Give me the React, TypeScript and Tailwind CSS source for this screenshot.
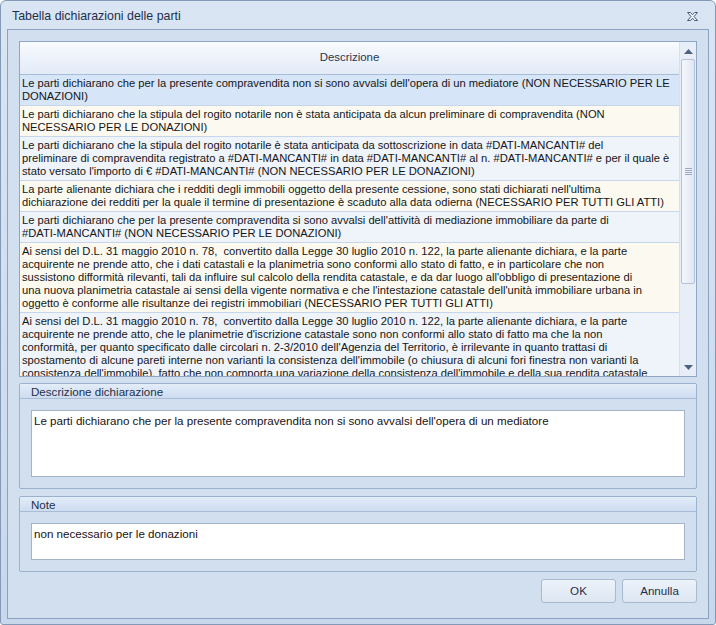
import React from "react";

const rows: { lines: string[]; bg: string }[] = [
  {
    bg: "bg-[#d6e5f8]",
    lines: [
      "Le parti dichiarano che per la presente compravendita non si sono avvalsi dell'opera di un mediatore (NON NECESSARIO PER LE",
      "DONAZIONI)",
    ],
  },
  {
    bg: "bg-[#fcfaf0]",
    lines: [
      "Le parti dichiarano che la stipula del rogito notarile non è stata anticipata da alcun preliminare di compravendita (NON",
      "NECESSARIO PER LE DONAZIONI)",
    ],
  },
  {
    bg: "bg-[#eff3fa]",
    lines: [
      "Le parti dichiarano che la stipula del rogito notarile è stata anticipata da sottoscrizione in data #DATI-MANCANTI# del",
      "preliminare di compravendita registrato a #DATI-MANCANTI# in data #DATI-MANCANTI# al n. #DATI-MANCANTI# e per il quale è",
      "stato versato l'importo di € #DATI-MANCANTI# (NON NECESSARIO PER LE DONAZIONI)",
    ],
  },
  {
    bg: "bg-[#fcfaf0]",
    lines: [
      "La parte alienante dichiara che i redditi degli immobili oggetto della presente cessione, sono stati dichiarati nell'ultima",
      "dichiarazione dei redditi per la quale il termine di presentazione è scaduto alla data odierna (NECESSARIO PER TUTTI GLI ATTI)",
    ],
  },
  {
    bg: "bg-[#eff3fa]",
    lines: [
      "Le parti dichiarano che per la presente compravendita si sono avvalsi dell'attività di mediazione immobiliare da parte di",
      "#DATI-MANCANTI# (NON NECESSARIO PER LE DONAZIONI)",
    ],
  },
  {
    bg: "bg-[#fcfaf0]",
    lines: [
      "Ai sensi del D.L. 31 maggio 2010 n. 78,  convertito dalla Legge 30 luglio 2010 n. 122, la parte alienante dichiara, e la parte",
      "acquirente ne prende atto, che i dati catastali e la planimetria sono conformi allo stato di fatto, e in particolare che non",
      "sussistono difformità rilevanti, tali da influire sul calcolo della rendita catastale, e da dar luogo all'obbligo di presentazione di",
      "una nuova planimetria catastale ai sensi della vigente normativa e che l'intestazione catastale dell'unità immobiliare urbana in",
      "oggetto è conforme alle risultanze dei registri immobiliari (NECESSARIO PER TUTTI GLI ATTI)",
    ],
  },
  {
    bg: "bg-[#eff3fa]",
    lines: [
      "Ai sensi del D.L. 31 maggio 2010 n. 78,  convertito dalla Legge 30 luglio 2010 n. 122, la parte alienante dichiara, e la parte",
      "acquirente ne prende atto, che le planimetrie d'iscrizione catastale sono non conformi allo stato di fatto ma che la non",
      "conformità, per quanto specificato dalle circolari n. 2-3/2010 dell'Agenzia del Territorio, è irrilevante in quanto trattasi di",
      "spostamento di alcune pareti interne non varianti la consistenza dell'immobile (o chiusura di alcuni fori finestra non varianti la",
      "consistenza dell'immobile), fatto che non comporta una variazione della consistenza dell'immobile e della sua rendita catastale",
    ],
  },
];

function CloseIcon() {
  return (
    <svg width="13" height="11" viewBox="0 0 13 11">
      <path
        d="M1.5 1.5h3l2 2.3 2-2.3h3l-3.5 4 3.5 4h-3l-2-2.3-2 2.3h-3l3.5-4z"
        fill="#f4f7fb"
        stroke="#4a5a72"
        strokeWidth="1"
        strokeLinejoin="round"
      />
    </svg>
  );
}

function GroupBox({ title, text, h }: { title: string; text: string; h: string }) {
  return (
    <div className="border border-[#9cb1ce] rounded-[2px] flex flex-col">
      <div className="h-[15px] bg-gradient-to-b from-[#e3edf9] to-[#cddcf0] border-b border-[#a9bcd6] flex items-center px-[11px] text-[11.6px] leading-[15px] text-[#1e2f4a]">
        {title}
      </div>
      <div className="px-[11px] pt-[11px] pb-[11px]">
        <div className={`${h} bg-white border border-[#a5b3c6] px-[2px] pt-[3px] text-[11.6px] leading-[14px] text-[#1a1212]`}>
          {text}
        </div>
      </div>
    </div>
  );
}

export default function App() {
  return (
    <div className="w-[716px] h-[625px] bg-gradient-to-b from-[#d9e5f3] to-[#c8d8ec] border border-[#8499b6] rounded-t-[6px] rounded-b-[3px] flex flex-col font-['Liberation_Sans',Arial,sans-serif] overflow-hidden">
      {/* barra del titolo */}
      <div className="h-[28px] flex items-center justify-between pl-[11px] pr-[16px] pt-[2px]">
        <span className="text-[12.4px] text-[#1e2f4a]">Tabella dichiarazioni delle parti</span>
        <CloseIcon />
      </div>

      <div className="mx-[6px] mb-[5px] flex-1 border border-[#8ba2c2] bg-[#d2dfef] p-[11px] flex flex-col">
        {/* griglia */}
        <div className="h-[336px] border border-[#8fa6c6] bg-white flex">
          <div className="flex-1 flex flex-col overflow-hidden">
            <div className="h-[33px] shrink-0 border-b border-[#a9bdd8] bg-gradient-to-b from-[#f8fbfe] to-[#e2ebf7] flex items-center justify-center text-[11.4px] text-[#27354d]">
              Descrizione
            </div>
            {rows.map((r, i) => (
              <div
                key={i}
                className={`${r.bg} shrink-0 border-b border-[#c7d6ea] px-[2px] py-[2px] text-[11.2px] leading-[13px] text-[#161616] whitespace-pre`}
              >
                {r.lines.map((l, j) => (
                  <div key={j}>{l}</div>
                ))}
              </div>
            ))}
          </div>
          {/* scrollbar */}
          <div className="w-[17px] shrink-0 bg-[#e8eef7] border-l border-[#d6e0ee] flex flex-col items-center">
            <div className="h-[16px] flex items-center justify-center mt-[1px]">
              <svg width="9" height="5" viewBox="0 0 9 5">
                <path d="M4.5 0L9 5H0z" fill="#4e6282" />
              </svg>
            </div>
            <div className="w-[14px] h-[225px] rounded-[2px] border border-[#b2c2d8] bg-gradient-to-r from-[#f4f7fc] to-[#dfe7f3] flex items-center justify-center">
              <div className="flex flex-col gap-[1px]">
                <div className="w-[7px] h-px bg-[#9aabc3]" />
                <div className="w-[7px] h-px bg-[#9aabc3]" />
                <div className="w-[7px] h-px bg-[#9aabc3]" />
                <div className="w-[7px] h-px bg-[#9aabc3]" />
              </div>
            </div>
            <div className="flex-1" />
            <div className="h-[16px] flex items-center justify-center mb-[1px]">
              <svg width="9" height="5" viewBox="0 0 9 5">
                <path d="M0 0H9L4.5 5z" fill="#4e6282" />
              </svg>
            </div>
          </div>
        </div>

        <div className="mt-[6px]">
          <GroupBox
            title="Descrizione dichiarazione"
            h="h-[67px]"
            text="Le parti dichiarano che per la presente compravendita non si sono avvalsi dell'opera di un mediatore"
          />
        </div>
        <div className="mt-[7px]">
          <GroupBox title="Note" h="h-[37px]" text="non necessario per le donazioni" />
        </div>

        {/* pulsanti */}
        <div className="mt-[7px] flex justify-end gap-[6px]">
          <button className="w-[75px] h-[24px] rounded-[3px] border border-[#a9b9cf] bg-gradient-to-b from-[#eef3fa] to-[#dce5f1] text-[11.6px] text-[#1e2f4a]">
            OK
          </button>
          <button className="w-[75px] h-[24px] rounded-[3px] border border-[#a9b9cf] bg-gradient-to-b from-[#eef3fa] to-[#dce5f1] text-[11.6px] text-[#1e2f4a]">
            Annulla
          </button>
        </div>
      </div>
    </div>
  );
}
